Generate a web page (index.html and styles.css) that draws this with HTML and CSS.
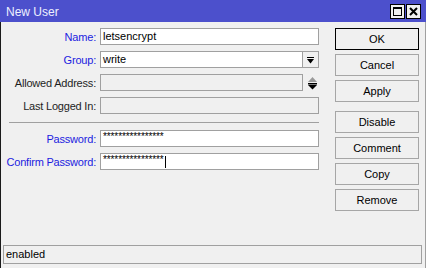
FILE: index.html
```
<!DOCTYPE html>
<html lang="en">
<head>
    <meta charset="UTF-8">
    <meta name="viewport" content="width=device-width, initial-scale=1.0">
    <title>New User</title>
    <link rel="stylesheet" href="styles.css">
</head>
<body>
    <div class="window">
        <header class="titlebar">
            <span class="title">New User</span>
            <div class="title-buttons">
                <span class="title-btn">
                    <svg width="11" height="11" viewBox="0 0 11 11"><rect x="1.5" y="1.5" width="8" height="8" fill="none" stroke="#000" stroke-width="1"/><rect x="1" y="1" width="9" height="2" fill="#000"/></svg>
                </span>
                <span class="title-btn">
                    <svg width="11" height="11" viewBox="0 0 11 11"><path d="M2 2 L9 9 M9 2 L2 9" stroke="#000" stroke-width="2"/></svg>
                </span>
            </div>
        </header>
        <div class="main">
            <div class="content">
                <div class="form">
                    <div class="row">
                        <label class="label blue">Name:</label>
                        <div class="field"><div class="input">letsencrypt</div></div>
                    </div>
                    <div class="row">
                        <label class="label blue">Group:</label>
                        <div class="field">
                            <div class="input">write</div>
                            <span class="drop-btn">
                                <svg width="7" height="7" viewBox="0 0 7 7"><rect x="0" y="0" width="7" height="1" fill="#000"/><path d="M0 2 H7 L3.5 6.5 Z" fill="#000"/></svg>
                            </span>
                        </div>
                    </div>
                    <div class="row">
                        <label class="label">Allowed Address:</label>
                        <div class="field">
                            <div class="input disabled short"></div>
                            <span class="updown">
                                <svg width="9" height="13" viewBox="0 0 9 13"><path d="M0 5 L4.5 0 L9 5 Z" fill="#9a9a9a"/><rect x="0" y="6" width="9" height="1.5" fill="#000"/><path d="M0 8 H9 L4.5 12.5 Z" fill="#000"/></svg>
                            </span>
                        </div>
                    </div>
                    <div class="row">
                        <label class="label">Last Logged In:</label>
                        <div class="field"><div class="input disabled"></div></div>
                    </div>
                    <div class="separator"></div>
                    <div class="row">
                        <label class="label blue">Password:</label>
                        <div class="field"><div class="input"><span class="stars">****************</span></div></div>
                    </div>
                    <div class="row">
                        <label class="label blue">Confirm Password:</label>
                        <div class="field"><div class="input"><span class="stars">****************</span><span class="caret"></span></div></div>
                    </div>
                </div>
                <div class="buttons">
                    <button class="btn default">OK</button>
                    <button class="btn">Cancel</button>
                    <button class="btn">Apply</button>
                    <button class="btn group-start">Disable</button>
                    <button class="btn">Comment</button>
                    <button class="btn">Copy</button>
                    <button class="btn">Remove</button>
                </div>
            </div>
            <div class="status">enabled</div>
        </div>
    </div>
</body>
</html>
```

FILE: styles.css
```
body {
    margin: 0;
    padding: 0;
    font-family: "Liberation Sans", Arial, sans-serif;
    font-size: 11px;
    color: #000;
    background-color: #f0f0f0;
}
.window {
    width: 426px;
    height: 268px;
    display: flex;
    flex-direction: column;
    background-color: #f0f0f0;
}
/* title bar */
.titlebar {
    height: 22px;
    flex: none;
    background-color: #4c50cc;
    display: flex;
    align-items: center;
    justify-content: space-between;
    padding: 0 5px 0 6px;
}
.title {
    color: #eef0ff;
    font-size: 12px;
    padding-top: 1px;
}
.title-buttons {
    display: flex;
    gap: 1px;
}
.title-btn {
    width: 13px;
    height: 13px;
    border: 1px solid #000;
    background-color: #f0f0f0;
    display: flex;
    align-items: center;
    justify-content: center;
}
.title-btn svg {
    display: block;
}
/* body */
.main {
    flex: 1;
    display: flex;
    flex-direction: column;
    border-left: 1px solid #1a1a1a;
    border-right: 1px solid #a0a0a0;
}
.content {
    display: flex;
    padding-top: 6px;
}
.form {
    width: 318px;
    display: flex;
    flex-direction: column;
    gap: 6px;
}
.row {
    display: grid;
    grid-template-columns: 95px 219px;
    column-gap: 4px;
    align-items: center;
    height: 17px;
}
.label {
    text-align: right;
    color: #1e1e1e;
    white-space: nowrap;
    letter-spacing: -0.2px;
    padding-top: 1px;
}
.label.blue {
    color: #1c1ce0;
}
.field {
    display: flex;
    align-items: center;
    height: 17px;
}
.input {
    flex: 1;
    height: 15px;
    border: 1px solid #a0a0a0;
    background-color: #fff;
    padding-left: 2px;
    line-height: 15px;
    white-space: nowrap;
    overflow: hidden;
    display: flex;
    align-items: center;
}
.input.disabled {
    background-color: #f0f0f0;
}
.input.short {
    flex: none;
    width: 199px;
}
.drop-btn {
    width: 15px;
    height: 15px;
    border: 1px solid #a0a0a0;
    border-left: none;
    background-color: #f0f0f0;
    display: flex;
    align-items: center;
    justify-content: center;
}
.drop-btn svg {
    display: block;
    margin-top: 1px;
}
.updown {
    margin-left: 5px;
    display: flex;
    align-items: center;
}
.updown svg {
    display: block;
    margin-top: 1px;
}
.stars {
    font-size: 10px;
    align-self: flex-start;
    line-height: 12px;
    letter-spacing: -0.1px;
}
.caret {
    display: inline-block;
    width: 1px;
    height: 12px;
    background-color: #000;
    margin-left: 1px;
}
.separator {
    height: 1px;
    margin: 2px 0 1px 8px;
    width: 310px;
    background-color: #a0a0a0;
}
/* right buttons */
.buttons {
    margin-left: 16px;
    width: 84px;
    display: flex;
    flex-direction: column;
    gap: 4px;
}
.btn {
    height: 22px;
    width: 84px;
    padding: 0;
    font-family: "Liberation Sans", Arial, sans-serif;
    font-size: 11px;
    color: #000;
    background-color: #f0f0f0;
    border: 1px solid #a6a6a6;
    border-radius: 0;
}
.btn.default {
    border-color: #000;
}
.btn.group-start {
    margin-top: 5px;
}
/* status bar */
.status {
    margin: auto 3px 4px 2px;
    height: 17px;
    border: 1px solid #a0a0a0;
    padding-left: 2px;
    line-height: 17px;
}
```
